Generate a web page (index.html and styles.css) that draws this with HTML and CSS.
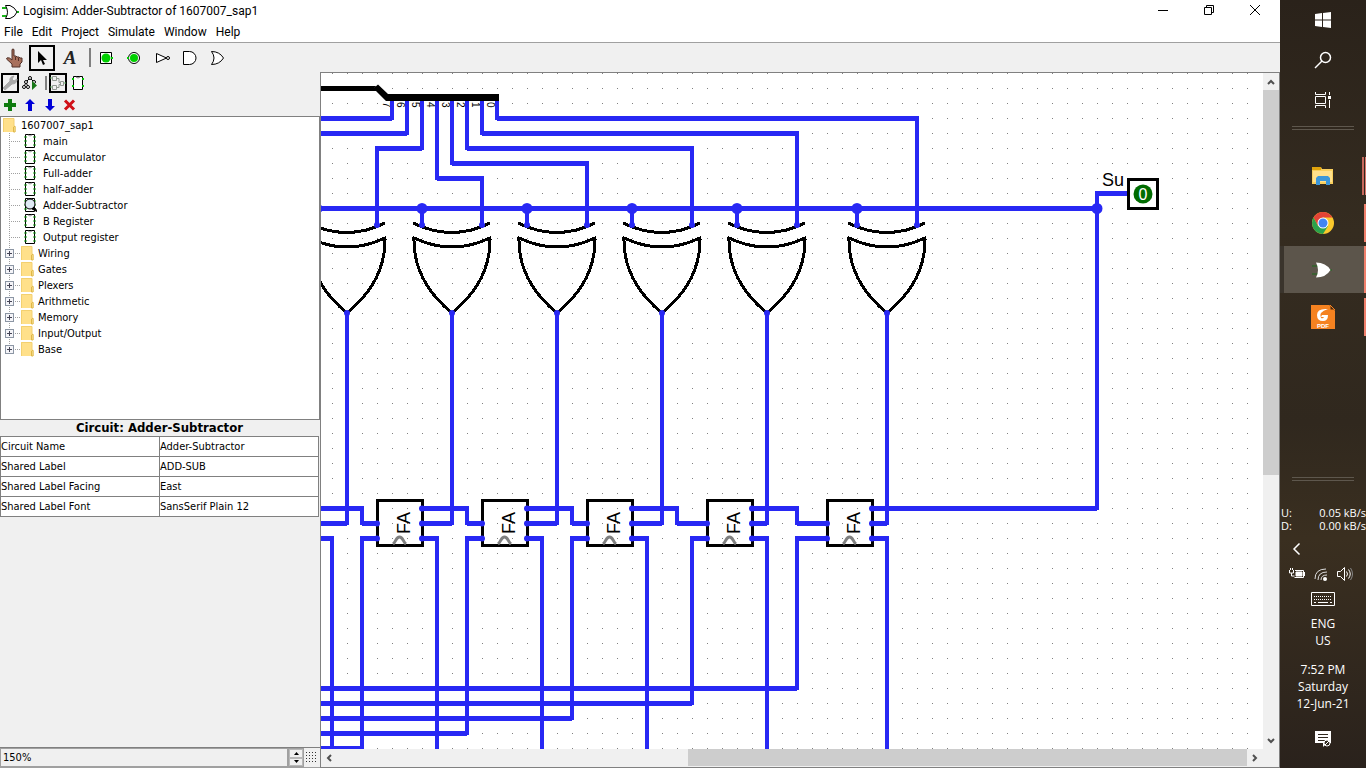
FILE: index.html
```html
<!DOCTYPE html>
<html lang="en">
<head>
<meta charset="utf-8">
<title>Logisim: Adder-Subtractor of 1607007_sap1</title>
<link rel="stylesheet" href="styles.css">
</head>
<body>
<svg class="defs" aria-hidden="true">
  <defs>
    <symbol id="circuit" viewBox="0 0 14 16">
      <path d="M2.500 1.500h9v13h-9z" fill="#fff" stroke="#000"/>
      <path d="M5 2q2 2 4 0" fill="none" stroke="#999"/>
      <path d="M1 4h3M1 8h3M1 12h3M10 4h3M10 8h3M10 12h3" stroke="#18a018" stroke-width="1"/>
    </symbol>
    <symbol id="folder" viewBox="0 0 14 16">
      <path d="M0 1h11v8l1 1v5H0z" fill="#ffe08a"/>
      <path d="M.5 15V1.500h10.500V9l1 1v5" fill="none" stroke="#f3d070"/>
      <path d="M10.500 15v-5l1.500-1v6z" fill="#fff0b0" stroke="#e0b848"/>
    </symbol>
    <symbol id="xor" viewBox="-40 -92 80 94" overflow="visible">
      <path d="M-39-90Q0-71 38-90M-38-75Q0-57 38-75Q39-32 0 0Q-39-32-38-75z" fill="none" stroke="#000" stroke-width="3" shape-rendering="crispEdges"/>
    </symbol>
    <symbol id="fa" viewBox="0 0 48 48" overflow="visible">
      <path d="M1.500 1.500h45v45h-45z" fill="none" stroke="#000" stroke-width="3"/>
      <path d="M17 45C20 43 20 38 23.500 38S27 43 30 45" fill="none" stroke="#808080" stroke-width="3"/>
      <text class="fa-label" transform="translate(34 35) rotate(-90)">FA</text>
    </symbol>
    <pattern id="dots" width="15" height="15" patternUnits="userSpaceOnUse" x="332" y="73">
      <path d="M0 0h1v1H0z" fill="#808080"/>
    </pattern>
  </defs>
</svg>
<div class="desktop">
  <main class="window">
    <header class="titlebar">
      <svg class="app-icon" viewBox="0 0 18 18"><path d="M1 5h5M1 13h5M14 9h4" stroke="#1bb51b" stroke-width="2"/><path d="M4.500 2.500H9q5 2 7 6.500q-2 5-7 6.500H4.500q4-6 0-13z" fill="#fff" stroke="#000"/></svg>
      <h1>Logisim: Adder-Subtractor of 1607007_sap1</h1>
      <div class="caption">
        <button aria-label="Minimize"><svg viewBox="0 0 12 12"><path d="M1 6.500h10" stroke="#000"/></svg></button>
        <button aria-label="Restore"><svg viewBox="0 0 12 12"><path d="M1.500 3.500h7v7h-7zM3.500 3V1.500h7v7H9" fill="none" stroke="#000"/></svg></button>
        <button aria-label="Close"><svg viewBox="0 0 12 12"><path d="M1 1l10 10M11 1L1 11" stroke="#000"/></svg></button>
      </div>
    </header>
    <nav class="menubar">
      <button>File</button><button>Edit</button><button>Project</button><button>Simulate</button><button>Window</button><button>Help</button>
    </nav>
    <div class="toolbar">
      <button aria-label="Poke"><svg viewBox="0 0 18 20"><path d="M7 1.500q1-1 2 0V8h2l1 1h2l1 1h2v4l-2 2v3H7v-3L1.500 11q0-2 3-1L7 12z" fill="#a8705c" stroke="#503028"/><path d="M10.500 9v3M13.500 10v3" stroke="#503028"/></svg></button>
      <button class="on" aria-label="Edit"><svg viewBox="0 0 18 20"><path d="M5 3v12l3-3 2 5 2-1-2-4h4z"/></svg></button>
      <button aria-label="Text" class="glyph">A</button>
      <i class="sep"></i>
      <button aria-label="Input pin"><svg viewBox="0 0 18 20"><path d="M3.500 4.500h11v11h-11z" fill="#fff" stroke="#000"/><circle cx="9" cy="10" r="4.500" fill="#00d000"/><path d="M14 10h2" stroke="#00d000" stroke-width="2"/></svg></button>
      <button aria-label="Output pin"><svg viewBox="0 0 18 20"><circle cx="9" cy="10" r="5.500" fill="#fff" stroke="#000"/><circle cx="9" cy="10" r="4" fill="#00d000"/><path d="M2 10h2" stroke="#00d000" stroke-width="2"/></svg></button>
      <button aria-label="NOT gate"><svg viewBox="0 0 18 20"><path d="M3.500 5.500v9l10-4.500z" fill="#fff" stroke="#000"/><circle cx="15" cy="10" r="1.500" fill="#fff" stroke="#000"/></svg></button>
      <button aria-label="AND gate"><svg viewBox="0 0 18 20"><path d="M2.500 3.500h6a6.500 6.500 0 0 1 0 13h-6z" fill="#fff" stroke="#000"/></svg></button>
      <button aria-label="OR gate"><svg viewBox="0 0 18 20"><path d="M2.500 3.500q8 0 12 6.500q-4 6.500-12 6.500q5-6.500 0-13z" fill="#fff" stroke="#000"/></svg></button>
    </div>
    <div class="workspace">
      <aside class="sidebar">
        <div class="tools">
          <button class="on" aria-label="Toolbox view"><svg viewBox="0 0 16 16"><path d="M1 13l7-7q-1-4 4-5l-2 3 2 2 3-2q0 5-5 5l-7 6z" fill="#aaa" stroke="#aaa"/></svg></button>
          <button aria-label="Simulation tree"><svg viewBox="0 0 16 16"><path d="M8 3L4 7l-2 5M4 7l2 5M8 3l4 4" fill="none" stroke="#000"/><g fill="#fff" stroke="#000"><circle cx="8" cy="3" r="1.500"/><circle cx="4" cy="7" r="1.500"/><circle cx="12" cy="7" r="1.500"/><circle cx="2" cy="12" r="1.500"/><circle cx="6" cy="12" r="1.500"/></g><path d="M10 6v9l5-4.500z" fill="#187818"/></svg></button>
          <i class="sep"></i>
          <button class="on" aria-label="Circuit layout"><svg viewBox="0 0 16 16"><path d="M2.500 1.500h4v4h-4zM2.500 10.500h4v4h-4zM10.500 6.500h3v4h-3zM7 3.500h2v4h2M7 12.500h2v-3h2" fill="none" stroke="#909890"/><path d="M0 3h2M0 12h2M14 8h2" stroke="#60b060"/></svg></button>
          <button aria-label="Circuit appearance"><svg viewBox="0 0 16 16"><path d="M3.500 1.500h9v13h-9z" fill="#fff" stroke="#000"/><path d="M6 2q2 2 4 0" fill="none" stroke="#777"/><path d="M2 4h2M2 11h2M12 4h2M12 11h2" stroke="#00c000" stroke-width="2"/></svg></button>
        </div>
        <div class="tools">
          <button aria-label="Add circuit"><svg viewBox="0 0 16 16"><path d="M6 2h4v4h4v4h-4v4H6v-4H2V6h4z" fill="#107c10"/></svg></button>
          <button aria-label="Move up"><svg viewBox="0 0 16 16"><path d="M8 2l5 5h-3v7H6V7H3z" fill="#0000d8"/></svg></button>
          <button aria-label="Move down"><svg viewBox="0 0 16 16"><path d="M8 14l5-5h-3V2H6v7H3z" fill="#0000d8"/></svg></button>
          <button aria-label="Delete"><svg viewBox="0 0 16 16"><path d="M3 3.500l9 9M12 3.500l-9 9" stroke="#d01018" stroke-width="3"/></svg></button>
        </div>
        <div class="tree">
          <div class="root"><svg class="ico"><use href="#folder"/></svg>1607007_sap1</div>
          <ul>
            <li class="leaf"><svg class="ico"><use href="#circuit"/></svg>main</li>
            <li class="leaf"><svg class="ico"><use href="#circuit"/></svg>Accumulator</li>
            <li class="leaf"><svg class="ico"><use href="#circuit"/></svg>Full-adder</li>
            <li class="leaf"><svg class="ico"><use href="#circuit"/></svg>half-adder</li>
            <li class="leaf"><svg class="ico" viewBox="0 0 14 16"><use href="#circuit" width="14" height="16"/><circle cx="7" cy="7" r="5" fill="#dfeaf4" stroke="#000"/><path d="M9 12l2-2 4 5z" stroke="#000"/></svg>Adder-Subtractor</li>
            <li class="leaf"><svg class="ico"><use href="#circuit"/></svg>B Register</li>
            <li class="leaf"><svg class="ico"><use href="#circuit"/></svg>Output register</li>
            <li><button class="plus" aria-label="Expand Wiring"></button><svg class="ico"><use href="#folder"/></svg>Wiring</li>
            <li><button class="plus" aria-label="Expand Gates"></button><svg class="ico"><use href="#folder"/></svg>Gates</li>
            <li><button class="plus" aria-label="Expand Plexers"></button><svg class="ico"><use href="#folder"/></svg>Plexers</li>
            <li><button class="plus" aria-label="Expand Arithmetic"></button><svg class="ico"><use href="#folder"/></svg>Arithmetic</li>
            <li><button class="plus" aria-label="Expand Memory"></button><svg class="ico"><use href="#folder"/></svg>Memory</li>
            <li><button class="plus" aria-label="Expand Input/Output"></button><svg class="ico"><use href="#folder"/></svg>Input/Output</li>
            <li><button class="plus" aria-label="Expand Base"></button><svg class="ico"><use href="#folder"/></svg>Base</li>
          </ul>
        </div>
        <section class="attributes">
          <h2>Circuit: Adder-Subtractor</h2>
          <table>
            <tr><th scope="row">Circuit Name</th><td>Adder-Subtractor</td></tr>
            <tr><th scope="row">Shared Label</th><td>ADD-SUB</td></tr>
            <tr><th scope="row">Shared Label Facing</th><td>East</td></tr>
            <tr><th scope="row">Shared Label Font</th><td>SansSerif Plain 12</td></tr>
          </table>
        </section>
        <div class="zoombar">
          <input type="text" value="150%" aria-label="Zoom">
          <div class="spin"><button aria-label="Zoom in"><svg viewBox="0 0 7 4"><path d="M1 4h5L3.500 1z"/></svg></button><button aria-label="Zoom out"><svg viewBox="0 0 7 4"><path d="M1 0h5L3.500 3z"/></svg></button></div>
          <button class="grid-toggle" aria-label="Show grid"><svg viewBox="0 0 12 12"><path d="M0 .5h12M0 3.500h12M0 6.500h12M0 9.500h12" stroke="#333" stroke-dasharray="1 2"/></svg></button>
        </div>
      </aside>
      <section class="editor">
        <svg class="canvas" role="img" aria-label="Adder-Subtractor circuit">
          <g transform="translate(-321 -73)">
            <path d="M332 73h916v676H332z" fill="url(#dots)"/>
            <g class="digits">
              <text transform="translate(383 102) rotate(90)">7</text>
              <text transform="translate(397 102) rotate(90)">6</text>
              <text transform="translate(412 102) rotate(90)">5</text>
              <text transform="translate(427 102) rotate(90)">4</text>
              <text transform="translate(442 102) rotate(90)">3</text>
              <text transform="translate(457 102) rotate(90)">2</text>
              <text transform="translate(472 102) rotate(90)">1</text>
              <text transform="translate(487 102) rotate(90)">0</text>
            </g>
            <use href="#xor" x="307" y="221" width="80" height="94"/>
            <use href="#xor" x="412" y="221" width="80" height="94"/>
            <use href="#xor" x="517" y="221" width="80" height="94"/>
            <use href="#xor" x="622" y="221" width="80" height="94"/>
            <use href="#xor" x="727" y="221" width="80" height="94"/>
            <use href="#xor" x="847" y="221" width="80" height="94"/>
            <use href="#fa" x="376" y="499" width="48" height="48"/>
            <use href="#fa" x="481" y="499" width="48" height="48"/>
            <use href="#fa" x="586" y="499" width="48" height="48"/>
            <use href="#fa" x="706" y="499" width="48" height="48"/>
            <use href="#fa" x="826" y="499" width="48" height="48"/>
            <path class="wire-h" d="M320 118.500H392M497 118.500H917M320 133.500H407M482 133.500H797M377 148.500H422M467 148.500H692M452 163.500H587M437 178.500H482M320 208.500H1097M1097 193.500H1129
              M320 508.500H362M422 508.500H467M527 508.500H572M632 508.500H677M752 508.500H797M872 508.500H1097
              M320 523.500H347M362 523.500H378M422 523.500H452M467 523.500H483M527 523.500H557M572 523.500H588M632 523.500H662M677 523.500H708M752 523.500H767M797 523.500H828M872 523.500H887
              M320 538.500H332M362 538.500H378M422 538.500H437M467 538.500H483M527 538.500H542M572 538.500H588M632 538.500H647M692 538.500H708M752 538.500H767M797 538.500H828M872 538.500H887
              M320 688.500H797M320 703.500H692M320 718.500H572M320 733.500H467M320 748.500H362"/>
            <path class="wire-v" d="M392 103V118M407 103V133M422 103V148M437 103V178M452 103V163M467 103V148M482 103V133M497 103V118
              M377 148V225M482 178V225M587 163V225M692 148V225M797 133V225M917 118V225
              M422 208V225M527 208V225M632 208V225M737 208V225M857 208V225
              M347 314V523M452 314V523M557 314V523M662 314V523M767 314V523M887 314V523M1097 193V508
              M362 508V523M467 508V523M572 508V523M677 508V523M797 508V523
              M332 538V752M362 538V748M437 538V752M467 538V733M542 538V752M572 538V718M647 538V752M692 538V703M767 538V752M797 538V688M887 538V752"/>
            <path class="pins" d="M377 225h0M422 225h0M482 225h0M527 225h0M587 225h0M632 225h0M692 225h0M737 225h0M797 225h0M857 225h0M917 225h0M347 313h0M452 313h0M557 313h0M662 313h0M767 313h0M887 313h0
              M422 508.500h0M527 508.500h0M632 508.500h0M752 508.500h0M872 508.500h0
              M377 523.500h0M422 523.500h0M482 523.500h0M527 523.500h0M587 523.500h0M632 523.500h0M707 523.500h0M752 523.500h0M827 523.500h0M872 523.500h0
              M377 538.500h0M422 538.500h0M482 538.500h0M527 538.500h0M587 538.500h0M632 538.500h0M707 538.500h0M752 538.500h0M827 538.500h0M872 538.500h0"/>
            <path class="joints" d="M422 208.500h0M527 208.500h0M632 208.500h0M737 208.500h0M857 208.500h0M1097 208.500h0M317 208.500h0"/>
            <path d="M320 86H376L374 88L378 84.500L388 94H499V101H386L376 91H320z"/>
            <path d="M1128.500 179.500h29v29h-29z" fill="none" stroke="#000" stroke-width="3"/>
            <circle cx="1143" cy="194" r="9.500" fill="#006c00"/>
            <text class="pin-value" x="1143" y="200" text-anchor="middle">0</text>
            <text class="fa-label" x="1102" y="186">Su</text>
          </g>
        </svg>
        <div class="scroll vertical"><button aria-label="Scroll up"><svg viewBox="0 0 8 8"><path d="M1 6l3-3 3 3"/></svg></button><div class="track"><div class="thumb"></div></div><button aria-label="Scroll down"><svg viewBox="0 0 8 8"><path d="M1 2l3 3 3-3"/></svg></button></div>
        <div class="scroll horizontal"><button aria-label="Scroll left"><svg viewBox="0 0 8 8"><path d="M6 1L3 4l3 3"/></svg></button><div class="track"><div class="thumb"></div></div><button aria-label="Scroll right"><svg viewBox="0 0 8 8"><path d="M2 1l3 3-3 3"/></svg></button></div>
      </section>
    </div>
  </main>
  <aside class="taskbar">
    <button class="sys" aria-label="Start"><svg viewBox="0 0 18 18"><path d="M1 3l7-1v6.500H1zM9 2l8-1v7.500H9zM1 9.500h7V16l-7-1zM9 9.500h8V17l-8-1z" fill="#fff"/></svg></button>
    <button class="sys" aria-label="Search"><svg viewBox="0 0 18 18"><circle cx="11.500" cy="6.500" r="5" fill="none" stroke="#fff" stroke-width="1.500"/><path d="M8 10L1 17" stroke="#fff" stroke-width="1.500"/></svg></button>
    <button class="sys" aria-label="Task view"><svg viewBox="0 0 18 18"><path d="M1.500 1v2.500h10V1M1.500 5.500h10v7h-10zM1.500 17v-2.500h10V17M15.500 1v3M15.500 9v8" fill="none" stroke="#fff"/><path d="M14 5h3v3h-3z" fill="#fff"/></svg></button>
    <hr>
    <button class="app multi" aria-label="File Explorer"><svg viewBox="0 0 24 24"><path d="M1 3h9l1 2h11v15H1z" fill="#f9cf5d"/><path d="M1 3h9v3H1z" fill="#e0a30c"/><path d="M2 7h19v11H2z" fill="#ffe08c"/><path d="M5 21v-7l2-2h10l2 2v7h-4v-4H9v4z" fill="#3c96d8"/></svg></button>
    <button class="app" aria-label="Chrome"><svg viewBox="0 0 24 24"><circle cx="12" cy="12" r="11" fill="#fbc92c"/><path d="M2.500 6.500A11 11 0 0 1 21.500 6.500H12L7 15z" fill="#e34436"/><path d="M2.500 6.500A11 11 0 0 0 12 23l5-8H7z" fill="#2ba24c"/><circle cx="12" cy="12" r="5.500" fill="#fff"/><circle cx="12" cy="12" r="4.500" fill="#4285f4"/></svg></button>
    <button class="app active" aria-label="Logisim"><svg viewBox="0 0 24 24"><path d="M1 8h6M1 16h6M19 12h2" stroke="#1b6b1b" stroke-width="1"/><path d="M5 4.500q10 0 14.500 7.500Q15 19.500 5 19.500q4-7.500 0-15z" fill="#fff"/></svg></button>
    <button class="app" aria-label="Foxit PDF"><svg viewBox="0 0 24 24"><path d="M0 0h18l6 6v18H0z" fill="#f58220"/><path d="M19 0v5h5z" fill="#4a2a10" stroke="#f58220"/><path d="M17 4Q6 3 6 10q0 6 6 6 5 0 5-6h-6l-1 2h3q-1 2-3 1-3-6 7-9z" fill="#fff"/><text x="12" y="23" class="pdf" text-anchor="middle">PDF</text></svg></button>
    <div class="spacer"></div>
    <hr>
    <dl class="net"><dt>U:</dt><dd>0.05 kB/s</dd><dt>D:</dt><dd>0.00 kB/s</dd></dl>
    <button class="chevron" aria-label="Show hidden icons"><svg viewBox="0 0 12 14"><path d="M8.500 1.500L3 7l5.500 5.500" fill="none" stroke="#fff" stroke-width="1.500"/></svg></button>
    <div class="tray">
      <button aria-label="Battery"><svg viewBox="0 0 16 16"><path d="M.5 4v3h4V4M2.500 7v3h3M1.500 2v2M3.500 2v2" fill="none" stroke="#fff"/><path d="M6 4.500h8.500v7h-9M15.500 6v4" fill="none" stroke="#fff"/><path d="M7 6h6v4H7z" fill="#fff" stroke="#fff"/></svg></button>
      <button aria-label="Wi-Fi"><svg viewBox="0 0 16 16"><path d="M2 13Q2 3 13 3M5 14Q5 6 14 6M8 14Q8 9 14 9" fill="none" stroke="#ddd"/><circle cx="12" cy="13" r="2" fill="#fff"/></svg></button>
      <button aria-label="Volume"><svg viewBox="0 0 16 16"><path d="M.5 5.500h3l4-4v13l-4-4h-3zM9.500 5.500q2 2.500 0 5M11.500 3.500q3.500 4.500 0 9" fill="none" stroke="#fff"/><path d="M13.500 2q4 6 0 12" fill="none" stroke="#888"/></svg></button>
    </div>
    <button class="keyboard" aria-label="Touch keyboard"><svg viewBox="0 0 24 14"><path d="M.5.500h23v13H.5z" fill="none" stroke="#fff"/><path d="M3 4.500h18M3 7.500h18" stroke="#fff" stroke-dasharray="1 1"/><path d="M3 10.500h2M7 10.500h10M19 10.500h2" stroke="#fff"/></svg></button>
    <button class="label">ENG<br>US</button>
    <button class="label clock">7:52 PM<br>Saturday<br>12-Jun-21</button>
    <button class="notify" aria-label="Notifications"><svg viewBox="0 0 18 18"><path d="M1 1h16v12h-4l-4 4v-4H1z" fill="#fff"/><path d="M4 4.500h10M4 7.500h10M4 10.500h7" stroke="#30281e"/><circle cx="13" cy="13" r="3" fill="#30281e" stroke="#fff"/><path d="M11 15l4-4" stroke="#fff"/></svg></button>
  </aside>
</div>
</body>
</html>
```
FILE: styles.css
```css
* { box-sizing: border-box; }
body {
  margin: 0;
  font: 11px/16px "DejaVu Sans Condensed", "DejaVu Sans", sans-serif;
  color: #000;
}
button {
  display: flex;
  align-items: center;
  justify-content: center;
  margin: 0;
  padding: 0;
  border: 0;
  background: none;
  font: inherit;
  color: inherit;
}
svg { display: block; flex: none; }
.defs { position: absolute; width: 0; height: 0; }

.desktop { display: flex; height: 100vh; overflow: hidden; }
.window {
  display: flex;
  flex: 1;
  flex-direction: column;
  min-width: 0;
  background: #f0f0f0;
}

.titlebar {
  display: flex;
  align-items: center;
  height: 23px;
  padding-left: 1px;
  background: #fff;
}
.app-icon { width: 18px; height: 18px; }
.titlebar h1 {
  flex: 1;
  margin: 0 0 0 4px;
  font: 12px/23px Roboto, "Noto Sans", sans-serif;
}
.caption { display: flex; align-self: flex-start; margin-right: 2px; }
.caption button { width: 46px; height: 20px; }
.caption svg { width: 12px; height: 12px; }
.menubar {
  display: flex;
  gap: 9px;
  height: 20px;
  padding-left: 4px;
  border-bottom: 1px solid #a0a0a0;
  background: #fff;
  font: 12px/19px Roboto, "Noto Sans", sans-serif;
}

.toolbar { display: flex; align-items: center; height: 29px; }
.toolbar button { width: 28px; height: 26px; }
.toolbar svg { width: 18px; height: 20px; }
.toolbar .on { border: 2px solid #000; width: 26px; margin: 0 1px; }
.toolbar .glyph { font: italic bold 19px/20px "Liberation Serif", serif; color: #222; }
.sep { width: 2px; height: 19px; margin: 0 1px 0 5px; background: #808080; }

.workspace { display: flex; flex: 1; min-height: 0; }
.sidebar {
  display: flex;
  flex-direction: column;
  width: 321px;
  border-right: 1px solid #808080;
}
.tools { display: flex; align-items: center; height: 22px; }
.tools button { width: 20px; height: 20px; }
.tools svg { width: 16px; height: 16px; }
.tools .on { width: 18px; margin: 0 1px; border: 2px solid #000; }
.tools .sep { height: 14px; }

.tree {
  flex: 1;
  min-height: 0;
  overflow: hidden;
  border: 1px solid #808080;
  background: #fff;
  line-height: 18px;
}
.root, .tree li { display: flex; align-items: flex-start; height: 16px; }
.root { gap: 4px; padding-left: 2px; }
.ico { width: 14px; height: 16px; }
.tree ul {
  margin: 0 0 0 8px;
  padding: 0;
  list-style: none;
  background: repeating-linear-gradient(#a0a0a0 0 1px, #fff 1px 2px) 0 0 / 1px 216px no-repeat;
}
.tree li { gap: 3px; padding-left: 13px; background: repeating-linear-gradient(90deg, #a0a0a0 0 1px, transparent 1px 2px) 2px 8px / 10px 1px no-repeat; }
.tree .leaf { gap: 6px; padding-left: 14px; }
.plus {
  width: 9px;
  height: 9px;
  margin: 4px 4px 0 -17px;
  border: 1px solid #8c96a4;
  background:
    linear-gradient(#445, #445) center / 5px 1px no-repeat,
    linear-gradient(#445, #445) center / 1px 5px no-repeat,
    #f4f4f8;
}

.attributes { height: 328px; padding-right: 1px; border-bottom: 1px solid #808080; }
.attributes h2 {
  margin: 0;
  font: bold 13px/16px "DejaVu Sans Condensed", "DejaVu Sans", sans-serif;
  text-align: center;
}
table { width: 100%; border-collapse: collapse; table-layout: fixed; background: #fff; }
th, td { height: 20px; padding: 0; border: 1px solid #808080; font-weight: normal; text-align: left; line-height: 17px; }

.zoombar { display: flex; height: 20px; border-bottom: 1px solid #a0a0a0; }
.zoombar input {
  flex: 1;
  min-width: 0;
  padding: 0 2px;
  border: 1px solid #a0a0a0;
  background: #f0f0f0;
  font: inherit;
}
.spin { display: flex; flex-direction: column; width: 16px; border: 1px solid #a0a0a0; }
.spin button { flex: 1; border: 1px solid #b8b8b8; }
.spin svg { width: 7px; height: 4px; }
.grid-toggle { width: 16px; }
.grid-toggle svg { width: 12px; height: 12px; }

.editor {
  display: grid;
  flex: 1;
  grid-template: minmax(0, 1fr) 18px / minmax(0, 1fr) 16px;
  min-width: 0;
  border: solid #808080;
  border-width: 1px 1px 1px 0;
}
.canvas { width: 100%; height: 100%; background: #fff; }
.wire-h, .wire-v { fill: none; stroke: #2828f4; shape-rendering: crispEdges; }
.wire-h { stroke-width: 5; }
.wire-v { stroke-width: 4; stroke-linecap: square; }
.pins, .joints { fill: none; stroke: #2828f4; stroke-linecap: round; stroke-width: 6; }
.joints { stroke-width: 11; }
.fa-label { font: 18px "Liberation Sans", sans-serif; }
.digits { font: 10px "Liberation Sans", sans-serif; }
.pin-value { font: 16px "Liberation Sans", sans-serif; fill: #fff; }

.scroll { display: flex; background: #f0f0f0; }
.scroll button { width: 16px; height: 17px; }
.scroll svg { width: 8px; height: 8px; fill: none; stroke: #505050; stroke-width: 2; }
.track { display: flex; flex: 1; }
.thumb { background: #cdcdcd; }
.vertical { flex-direction: column; }
.vertical .thumb { width: 16px; height: 60%; }
.horizontal .track { justify-content: flex-end; }
.horizontal .thumb { width: 61.4%; height: 17px; }

.taskbar {
  display: flex;
  flex-direction: column;
  align-items: center;
  width: 86px;
  padding-bottom: 4px;
  background: linear-gradient(#2a221a, #352c20 30%, #30281e 55%, #3a2f20 70%, #2a221c);
  color: #fff;
  font: 12px/17px "Open Sans", "Noto Sans", sans-serif;
}
.taskbar button { flex: none; }
.sys { width: 86px; height: 40px; }
.sys svg { width: 18px; height: 18px; }
hr { flex: none; width: 62px; height: 4px; margin: 6px 0 22px; border: solid #5e574d; border-width: 1px 0; }
.taskbar .app { width: 86px; height: 47px; background: linear-gradient(#f0806c, #f0806c) right center / 2px 38px no-repeat; }
.app svg { width: 24px; height: 24px; }
.taskbar .multi {
  background:
    linear-gradient(90deg, #c8685c 2px, #30281e 2px 3px, #d8746a 3px) right center / 4px 38px no-repeat;
}
.taskbar .active {
  background:
    linear-gradient(#f0806c, #f0806c) right / 2px 100% no-repeat,
    linear-gradient(90deg, #3a342c 4px, #5c554b 4px);
}
.pdf { font: bold 6px "Liberation Sans", sans-serif; fill: #fff; }
.spacer { flex: 1; }
.net { display: grid; grid-template-columns: auto 1fr; width: 100%; margin: 0; padding-left: 1px; font: 11px/13px "Open Sans", "Noto Sans", sans-serif; }
.net dd { margin: 0; text-align: right; }
.chevron { width: 34px; height: 34px; align-self: flex-start; }
.chevron svg { width: 12px; height: 14px; }
.tray { display: flex; gap: 8px; margin-bottom: 10px; padding-right: 4px; }
.tray svg { width: 16px; height: 16px; }
.keyboard { margin-bottom: 9px; }
.keyboard svg { width: 24px; height: 14px; }
.label { line-height: 17px; }
.clock { margin: 12px 0 18px; }
.notify { margin-bottom: 16px; }
.notify svg { width: 18px; height: 18px; }
.taskbar .spacer + hr { margin-bottom: 25px; }
```
